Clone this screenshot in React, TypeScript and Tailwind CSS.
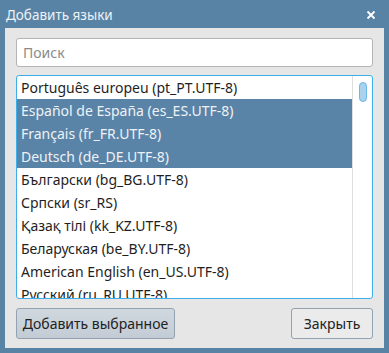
import React from "react";

const languages = [
  "Português europeu (pt_PT.UTF-8)",
  "Español de España (es_ES.UTF-8)",
  "Français (fr_FR.UTF-8)",
  "Deutsch (de_DE.UTF-8)",
  "Български (bg_BG.UTF-8)",
  "Српски (sr_RS)",
  "Қазақ тілі (kk_KZ.UTF-8)",
  "Беларуская (be_BY.UTF-8)",
  "American English (en_US.UTF-8)",
  "Русский (ru_RU.UTF-8)",
];

const initialSelected = [1, 2, 3];

export default function App() {
  const [selected, setSelected] = React.useState<number[]>(initialSelected);
  const [query, setQuery] = React.useState("");

  const toggle = (i: number) =>
    setSelected((s) => (s.includes(i) ? s.filter((x) => x !== i) : [...s, i]));

  return (
    <div className="flex h-[353px] w-[389px] flex-col bg-[#5883a5] px-[5px] pb-[5px] font-['Noto_Sans',sans-serif]">
      {/* title bar */}
      <div className="flex h-[28px] items-center justify-between pt-[2px]">
        <span className="pl-[1px] text-[13.5px] text-[#eef2f6]">Добавить языки</span>
        <svg width="10" height="10" viewBox="0 0 10 10" className="mr-[8px]">
          <path d="M1.5 1.5 L8.5 8.5 M8.5 1.5 L1.5 8.5" stroke="#ffffff" strokeWidth="1.8" />
        </svg>
      </div>

      {/* body */}
      <div className="flex flex-1 flex-col bg-[#e6e6e6] px-[11px] pt-[10px]">
        <input
          value={query}
          onChange={(e) => setQuery(e.target.value)}
          placeholder="Поиск"
          className="h-[29px] w-full rounded-[3px] border border-[#b4b4b4] bg-white px-[6px] text-[14px] text-[#222] outline-none placeholder:text-[#8a8a8a]"
        />

        <div className="mt-[8px] flex h-[224px] overflow-hidden rounded-[3px] border border-[#3daee9] bg-white">
          <ul className="flex-1 overflow-hidden">
            {languages.map((lang, i) => {
              const on = selected.includes(i);
              return (
                <li
                  key={lang}
                  onClick={() => toggle(i)}
                  className={`flex h-[23px] items-center px-[4px] text-[14px] whitespace-nowrap ${
                    on ? "bg-[#5a84a7] text-[#eef2f6]" : "text-[#1f1f1f]"
                  }`}
                >
                  {lang}
                </li>
              );
            })}
          </ul>
          <div className="w-[20px] border-l border-[#dedede] pt-[6px]">
            <div className="mx-auto h-[20px] w-[8px] rounded-full border border-[#6cb9e6] bg-[#a9d2ec]" />
          </div>
        </div>

        <div className="mt-[9px] flex justify-between">
          <button className="h-[31px] w-[159px] rounded-[3px] border border-[#93a2b0] bg-gradient-to-b from-[#d0d8df] to-[#c3ccd5] text-[14px] text-[#222]">
            Добавить выбранное
          </button>
          <button className="h-[31px] w-[82px] rounded-[3px] border border-[#93a2b0] bg-[#ebebeb] text-[14px] text-[#222]">
            Закрыть
          </button>
        </div>
      </div>
    </div>
  );
}
